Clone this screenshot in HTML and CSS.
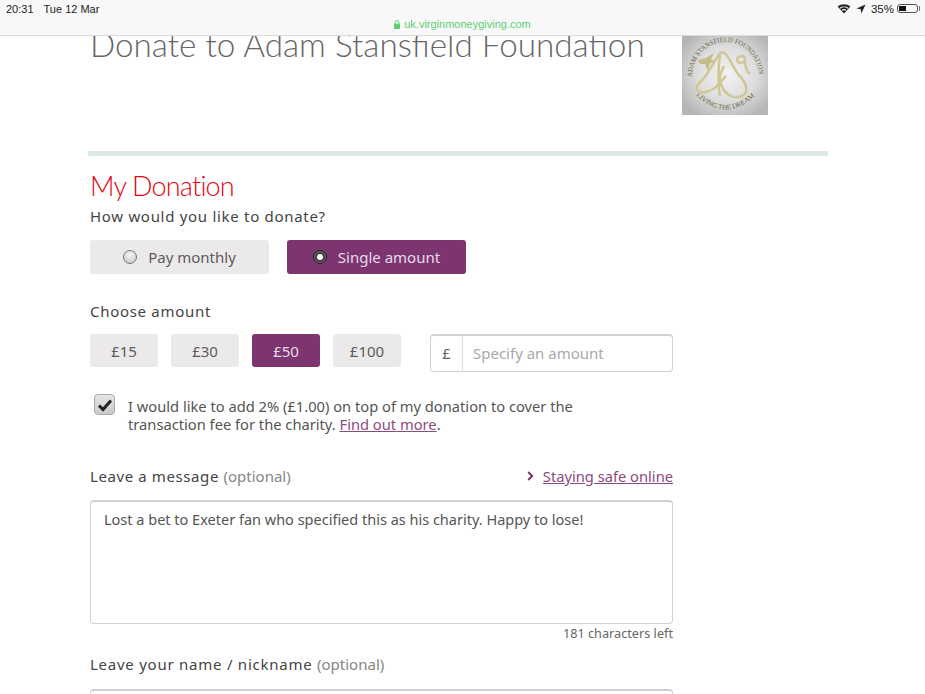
FILE: index.html
```html
<!DOCTYPE html>
<html lang="en">
<head>
    <meta charset="UTF-8">
    <meta name="viewport" content="width=device-width, initial-scale=1.0">
    <title>Donate to Adam Stansfield Foundation</title>
    <link rel="stylesheet" href="styles.css">
</head>
<body>

<!-- iPad status bar and address -->
<div class="status-bar">
    <div class="status-row">
        <span class="clock"><span>20:31</span><span>Tue 12 Mar</span></span>
        <span class="status-right">
            <svg class="wifi" width="14" height="11" viewBox="0 0 14 11"><path d="M7 10.5 L0.6 3.6 C4.2 0.4 9.8 0.4 13.4 3.6 Z" fill="#222"/><path d="M2.9 5.2 C5.2 3.5 8.8 3.5 11.1 5.2" stroke="#f8f8f8" stroke-width="1.1" fill="none"/><path d="M4.9 7.4 C6.1 6.5 7.9 6.5 9.1 7.4" stroke="#f8f8f8" stroke-width="1.1" fill="none"/></svg>
            <svg class="arrow" width="10" height="10" viewBox="0 0 10 10"><path d="M9.5 0.5 L0.5 4.6 L4.8 5.2 L5.4 9.5 Z" fill="#222"/></svg>
            <span>35%</span>
            <span class="battery"><span class="battery-fill"></span></span>
        </span>
    </div>
    <div class="address">
        <svg width="6" height="9" viewBox="0 0 6 9"><rect x="0" y="3.5" width="6" height="5.5" rx="0.8" fill="#5fcf74"/><path d="M1.2 3.8 V2.4 a1.8 1.8 0 0 1 3.6 0 V3.8" stroke="#5fcf74" fill="none"/></svg>
        uk.virginmoneygiving.com
    </div>
</div>

<div class="page">
    <div class="title-row">
        <h1>Donate to Adam Stansfield Foundation</h1>
        <svg class="logo" width="86" height="79" viewBox="0 0 86 79">
            <defs>
                <radialGradient id="logoBg" cx="52%" cy="48%" r="62%">
                    <stop offset="0" stop-color="#f2f3f2"/>
                    <stop offset="0.55" stop-color="#dcdddc"/>
                    <stop offset="1" stop-color="#b4b6b5"/>
                </radialGradient>
                <path id="logoTop" d="M10 41 A33.5 35 0 0 1 77 41"/>
                <path id="logoBottom" d="M12 57 Q43 90 76 57"/>
            </defs>
            <rect width="86" height="79" fill="url(#logoBg)"/>
            <text class="logo-text"><textPath href="#logoTop" textLength="105" lengthAdjust="spacingAndGlyphs">ADAM STANSFIELD FOUNDATION</textPath></text>
            <text class="logo-text"><textPath href="#logoBottom" startOffset="3">LIVING THE DREAM</textPath></text>
            <g class="logo-lines">
                <path d="M38 17 C30 28 26 40 18 46 C12 52 14 58 24 56 C34 54 38 46 44 40"/>
                <path d="M38 17 C36 35 36 50 38 60"/>
                <path d="M38 17 C44 12 50 30 56 38 C64 46 68 56 60 60 C50 64 42 58 38 46 C36 40 40 34 42 30"/>
                <path d="M55 24 C56 19 63 19 63 23 C63 28 55 28 55 24 M63 23 C63 30 65 36 68 38"/>
            </g>
            <path d="M16 24 L24 22 L32 17 L29 23 L33 26 L28 27 L26 35 L23 28 L18 28 Z" fill="#c4bd88"/>
        </svg>
    </div>

    <div class="rule"></div>

    <h2>My Donation</h2>

    <form class="form">
        <div class="label">How would you like to donate?</div>
        <div class="type-row">
            <div class="type-btn">
                <span class="radio"></span>
                Pay monthly
            </div>
            <div class="type-btn selected">
                <span class="radio on"></span>
                Single amount
            </div>
        </div>

        <div class="label">Choose amount</div>
        <div class="amount-row">
            <div class="amount-btn">£15</div>
            <div class="amount-btn">£30</div>
            <div class="amount-btn selected">£50</div>
            <div class="amount-btn">£100</div>
            <div class="amount-input">
                <span class="currency">£</span>
                <span class="placeholder">Specify an amount</span>
            </div>
        </div>

        <div class="fee-row">
            <span class="checkbox">
                <svg width="16" height="14" viewBox="0 0 16 14"><path d="M2 7.5 L6 11.5 L14 2.5" stroke="#222" stroke-width="3" fill="none"/></svg>
            </span>
            <p>I would like to add 2% (£1.00) on top of my donation to cover the transaction fee for the charity. <a href="#">Find out more</a>.</p>
        </div>

        <div class="message-head">
            <div class="label-inline">Leave a message <span class="optional">(optional)</span></div>
            <div class="safe-link">
                <svg width="7" height="10" viewBox="0 0 7 10"><path d="M1.2 1 L5.2 5 L1.2 9" stroke="#7c3570" stroke-width="2" fill="none"/></svg>
                <a href="#">Staying safe online</a>
            </div>
        </div>
        <div class="message-box">Lost a bet to Exeter fan who specified this as his charity. Happy to lose!</div>
        <div class="chars-left">181 characters left</div>

        <div class="label-inline name-label">Leave your name / nickname <span class="optional">(optional)</span></div>
        <div class="name-box"></div>
    </form>
</div>

</body>
</html>
```

FILE: styles.css
```css
html, body {
    height: 694px;
    overflow: hidden;
}

body {
    font-family: "Noto Sans", Arial, sans-serif;
    background-color: #fff;
    color: #4a4a4a;
    margin: 0;
}

.status-bar {
    height: 36px;
    box-sizing: border-box;
    background-color: #f8f8f8;
    border-bottom: 1px solid #dcdcdc;
    font-family: "Liberation Sans", Arial, sans-serif;
    position: relative;
    z-index: 1;
}

.status-row {
    display: flex;
    justify-content: space-between;
    align-items: center;
    padding: 1px 5px 0 6px;
    height: 15px;
    font-size: 11px;
    color: #222;
}

.clock {
    display: flex;
    gap: 10px;
}

.status-right {
    display: flex;
    align-items: center;
    gap: 5px;
    font-size: 11.5px;
}

.battery {
    width: 21px;
    height: 9px;
    border: 1px solid #555;
    border-radius: 3px;
    box-sizing: border-box;
    padding: 1px;
    margin-right: 2px;
    margin-left: -2px;
    position: relative;
}

.battery::after {
    content: "";
    position: absolute;
    right: -3px;
    top: 1px;
    width: 1px;
    height: 5px;
    background-color: #777;
}

.battery-fill {
    display: block;
    width: 7px;
    height: 5px;
    background-color: #111;
}

.address {
    display: flex;
    justify-content: center;
    align-items: center;
    gap: 4px;
    font-size: 11px;
    color: #5fcf74;
    height: 14px;
    margin-top: 1px;
}

.page {
    padding-left: 88px;
    width: 740px;
    height: 658px;
    overflow: hidden;
}

.title-row {
    display: flex;
    height: 79px;
    margin-bottom: 36px;
    padding-left: 2px;
}

h1 {
    font-family: Lato, Arial, sans-serif;
    font-weight: 300;
    font-size: 33.25px;
    line-height: 40px;
    color: #666;
    margin: -12px 0 0 0;
    width: 592px;
    white-space: nowrap;
}

.logo {
    flex: none;
}

.logo-text {
    font-family: "Liberation Serif", serif;
    font-size: 7px;
    fill: #6f6a45;
}

.logo-lines path {
    stroke: #cfc896;
    stroke-width: 2.5;
    fill: none;
}

.rule {
    height: 5px;
    background-color: #dde7e8;
}

h2 {
    font-family: Lato, Arial, sans-serif;
    font-weight: 300;
    font-size: 27px;
    line-height: 34px;
    letter-spacing: -0.8px;
    color: #e30613;
    margin: 13px 0 0 2px;
}

.form {
    width: 583px;
    margin-left: 2px;
}

.label {
    font-size: 15px;
    line-height: 20px;
    letter-spacing: 0.7px;
    color: #444;
    margin-top: 3px;
}

.type-row {
    display: flex;
    gap: 18px;
    margin-top: 14px;
    margin-bottom: 27px;
}

.type-btn {
    width: 179px;
    height: 34px;
    display: flex;
    justify-content: center;
    align-items: center;
    gap: 11px;
    background-color: #ece9ea;
    border-radius: 3px;
    font-size: 15px;
    color: #5c5c5c;
}

.type-btn.selected,
.amount-btn.selected {
    background-color: #7c3570;
    color: #e8dbe6;
}

.radio {
    width: 14px;
    height: 14px;
    box-sizing: border-box;
    border-radius: 50%;
    border: 1px solid #777;
    background: radial-gradient(circle at 50% 30%, #f4f4f4, #c4c4c4);
}

.radio.on {
    border-color: #222;
    background: radial-gradient(circle, #fff 0 2.5px, #3c3c3c 3.5px, #777 7px);
}

.amount-row {
    display: flex;
    align-items: flex-start;
    gap: 13px;
    margin-top: 13px;
}

.amount-btn {
    width: 68px;
    height: 33px;
    display: flex;
    justify-content: center;
    align-items: center;
    background-color: #ece9ea;
    border-radius: 3px;
    font-size: 15px;
    color: #5c5c5c;
}

.amount-input {
    display: flex;
    width: 243px;
    height: 38px;
    box-sizing: border-box;
    margin-left: 16px;
    border: 1px solid #d2d2d2;
    border-top: 2px solid #d2d2d2;
    border-radius: 4px;
    font-size: 15px;
    line-height: 34px;
}

.currency {
    width: 31px;
    text-align: center;
    color: #666;
    border-right: 1px solid #dcdcdc;
}

.placeholder {
    color: #a9a9a9;
    padding-left: 10px;
}

.fee-row {
    display: flex;
    gap: 13px;
    margin-top: 21px;
    padding-left: 4px;
}

.checkbox {
    flex: none;
    width: 21px;
    height: 21px;
    box-sizing: border-box;
    margin-top: 1px;
    display: flex;
    justify-content: center;
    align-items: center;
    border: 1px solid #aaa;
    border-radius: 4px;
    background: linear-gradient(#e6e6e6, #c9c9c9);
}

.fee-row p {
    margin: 4px 0 0 0;
    width: 470px;
    font-size: 14.7px;
    line-height: 18px;
    color: #555;
}

a {
    color: #8c4a80;
}

.message-head {
    display: flex;
    justify-content: space-between;
    align-items: center;
    margin-top: 33px;
    height: 20px;
}

.label-inline {
    font-size: 15px;
    letter-spacing: 0.6px;
    color: #444;
}

.optional {
    color: #858585;
    letter-spacing: 0;
}

.safe-link {
    display: flex;
    align-items: center;
    gap: 9px;
    font-size: 14.7px;
}

.message-box {
    height: 124px;
    box-sizing: border-box;
    margin-top: 14px;
    padding: 7px 13px;
    border: 1px solid #d2d2d2;
    border-top: 2px solid #cfcfcf;
    border-radius: 4px;
    font-size: 14.5px;
    line-height: 20px;
    color: #555;
}

.chars-left {
    text-align: right;
    font-size: 12.7px;
    line-height: 19px;
    color: #666;
}

.name-label {
    margin-top: 11px;
    line-height: 20px;
    letter-spacing: 0.75px;
}

.name-box {
    height: 40px;
    margin-top: 15px;
    border: 1px solid #d2d2d2;
    border-top: 2px solid #cfcfcf;
    border-radius: 4px;
}
```
